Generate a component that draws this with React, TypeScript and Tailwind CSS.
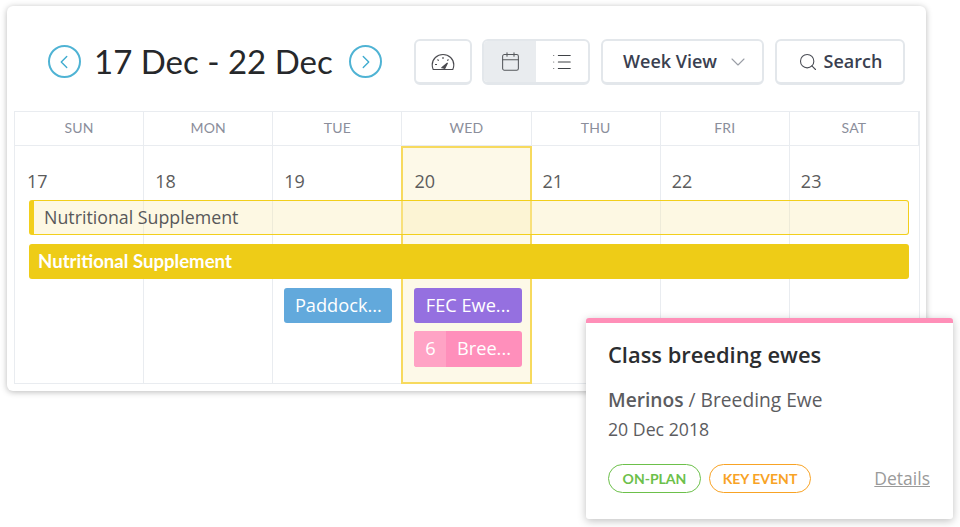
import { Calendar, ChevronDown, ChevronLeft, ChevronRight, List, Search } from "lucide-react";

const lato = "font-['Lato',sans-serif]";
const openSans = "font-['Open_Sans',sans-serif]";

const days = [
  { name: "SUN", date: 17 },
  { name: "MON", date: 18 },
  { name: "TUE", date: 19 },
  { name: "WED", date: 20 },
  { name: "THU", date: 21 },
  { name: "FRI", date: 22 },
  { name: "SAT", date: 23 },
];

function Gauge() {
  return (
    <svg width="24" height="20" viewBox="0 0 24 20" fill="none" stroke="#4a4a4f" strokeWidth="1.1">
      <path d="M2.2 17.5h19.6c.7-1.5 1-3 1-4.5C22.800 7 18 2.500 12 2.500S1.200 7 1.200 13c0 1.500.3 3 1 4.500z" />
      <path d="M12 5v2M6.500 7.500l1.200 1.200M17.500 7.500l-1.200 1.200M4 12.500h2" />
      <path d="M10.500 16l6-5-3 6" fill="#4a4a4f" />
    </svg>
  );
}

function ArrowCircle({ children }: { children: React.ReactNode }) {
  return (
    <button className="flex h-[33px] w-[33px] items-center justify-center rounded-full border-2 border-[#4fb3d4] text-[#3fabcf]">
      {children}
    </button>
  );
}

export default function App() {
  return (
    <div className="relative h-[527px] w-[960px] overflow-hidden bg-white pl-[7px] pt-[6px]">
      <div className={`h-[385px] w-[919px] rounded-md bg-white px-[7px] shadow-[0_1px_6px_rgba(0,0,0,0.28)] ${lato}`}>
        <div className="flex h-[105px] items-start pt-[33px]">
          <div className="ml-[34px] flex items-center pt-[6px]">
            <ArrowCircle>
              <ChevronLeft size={22} strokeWidth={1.5} className="-ml-px" />
            </ArrowCircle>
            <h1 className="ml-[13px] w-[255px] text-[33px] leading-[33px] whitespace-nowrap text-[#26282b]">17 Dec - 22 Dec</h1>
            <ArrowCircle>
              <ChevronRight size={22} strokeWidth={1.5} className="ml-px" />
            </ArrowCircle>
          </div>
          <button className="ml-[32px] flex h-[46px] w-[58px] items-center justify-center rounded-md border-2 border-b-[3px] border-[#e3e7eb] bg-white">
            <Gauge />
          </button>
          <div className="ml-[10px] flex h-[46px] w-[108px] overflow-hidden rounded-md border-2 border-b-[3px] border-[#e3e7eb] bg-white">
            <div className="flex w-[52px] items-center justify-center bg-[#e9ecef]">
              <Calendar size={21} strokeWidth={1.2} className="text-[#55585c]" />
            </div>
            <div className="flex flex-1 items-center justify-center">
              <List size={22} strokeWidth={1.1} className="text-[#3f4246]" />
            </div>
          </div>
          <button className={`ml-[11px] flex h-[46px] w-[163px] items-center justify-between rounded-md border-2 border-b-[3px] border-[#e3e7eb] bg-white pl-[20px] pr-[12px] text-[18px] font-semibold text-[#3a3f50] ${openSans}`}>
            Week View
            <ChevronDown size={24} strokeWidth={1.1} className="text-[#9a9ea6]" />
          </button>
          <button className={`ml-[11px] flex h-[46px] w-[130px] items-center justify-center gap-[6px] rounded-md border-2 border-b-[3px] border-[#e3e7eb] bg-white text-[18px] font-semibold text-[#3a3f50] ${openSans}`}>
            <Search size={20} strokeWidth={1.3} className="text-[#4a4d55]" />
            Search
          </button>
        </div>

        <div className="grid h-[273px] w-[906px] grid-cols-7 grid-rows-[34px_1fr] border border-[#e9ecf0]">
          {days.map((d) => (
            <div
              key={d.name}
              className="flex items-center justify-center border-b border-r border-[#e9ecf0] pb-[2px] text-[14px] tracking-[0.2px] text-[#8b8e9b] last:border-r-0"
            >
              {d.name}
            </div>
          ))}
          {days.map((d) => (
            <div
              key={d.date}
              className={`${openSans} flex flex-col ${
                d.date === 20
                  ? "-mb-px -ml-px border-2 border-[#f7da5e] bg-[#fdf9e8] pl-[11px] pr-[8px] pt-[19px]"
                  : d.date === 17
                    ? "border-r border-[#e9ecf0] pl-[12px] pr-[9px] pt-[21px]"
                    : "border-r border-[#e9ecf0] pl-[11px] pr-[9px] pt-[21px] last:border-r-0"
              }`}
            >
              <div className="text-[18px] leading-[28px] text-[#5c5c5c]">{d.date}</div>
              {d.date === 19 && (
                <div className="mt-[93px] flex h-[35px] items-center justify-center rounded-[3px] bg-[#62a9dc] text-[18.2px] text-white">
                  Paddock...
                </div>
              )}
              {d.date === 20 && (
                <>
                  <div className="mt-[93px] flex h-[35px] items-center justify-center rounded-[3px] bg-[#9570e0] text-[18.2px] text-white">
                    FEC Ewe...
                  </div>
                  <div className="mt-[8px] flex h-[36px] overflow-hidden rounded-[3px] bg-[#ff8fbb] text-[18.2px] text-white">
                    <div className="flex w-[32px] items-center justify-center bg-[#ffa3c5]">6</div>
                    <div className="flex flex-1 items-center justify-center">Bree...</div>
                  </div>
                </>
              )}
            </div>
          ))}
        </div>
      </div>

      {/* bars span several day cells so they lie over the grid */}
      <div className={`absolute left-[29px] top-[200px] flex h-[35px] w-[880px] items-center rounded-[3px] border border-l-[5px] border-[#f2cf1c] bg-[#f9ecb0]/35 pl-[10px] text-[17.8px] text-[#58585a] ${openSans}`}>
        Nutritional Supplement
      </div>
      <div className={`absolute left-[29px] top-[244px] flex h-[35px] w-[880px] items-center rounded-[3px] bg-[#eecc17] pl-[9px] pt-px text-[18.6px] font-bold text-white ${lato}`}>
        Nutritional Supplement
      </div>

      <div className={`absolute left-[586px] top-[318px] h-[201px] w-[367px] rounded-[3px] border-t-[5px] border-[#ff8fb8] bg-white px-[22px] shadow-[0_2px_8px_rgba(0,0,0,0.25)] ${openSans}`}>
        <div className="mt-[17px] text-[21.9px] font-semibold leading-[30px] text-[#2b2d30]">Class breeding ewes</div>
        <div className="mt-[16px] text-[19.2px] leading-[28px] text-[#5c5c5f]">
          <span className="font-semibold">Merinos</span> / Breeding Ewe
        </div>
        <div className="mt-[2px] text-[17.7px] leading-[26px] text-[#5c5c5f]">20 Dec 2018</div>
        <div className="mt-[22px] flex items-center">
          <span className={`flex h-[29px] w-[93px] items-center justify-center rounded-full border-[1.5px] border-[#6cc04a] text-[14px] font-bold text-[#6cc04a] ${lato}`}>ON-PLAN</span>
          <span className={`ml-[8px] flex h-[29px] w-[102px] items-center justify-center rounded-full border-[1.5px] border-[#f8a325] text-[14px] font-bold text-[#f8a325] ${lato}`}>KEY EVENT</span>
          <a className="ml-auto mr-px text-[17.5px] text-[#9a9a9a] underline">Details</a>
        </div>
      </div>
    </div>
  );
}
